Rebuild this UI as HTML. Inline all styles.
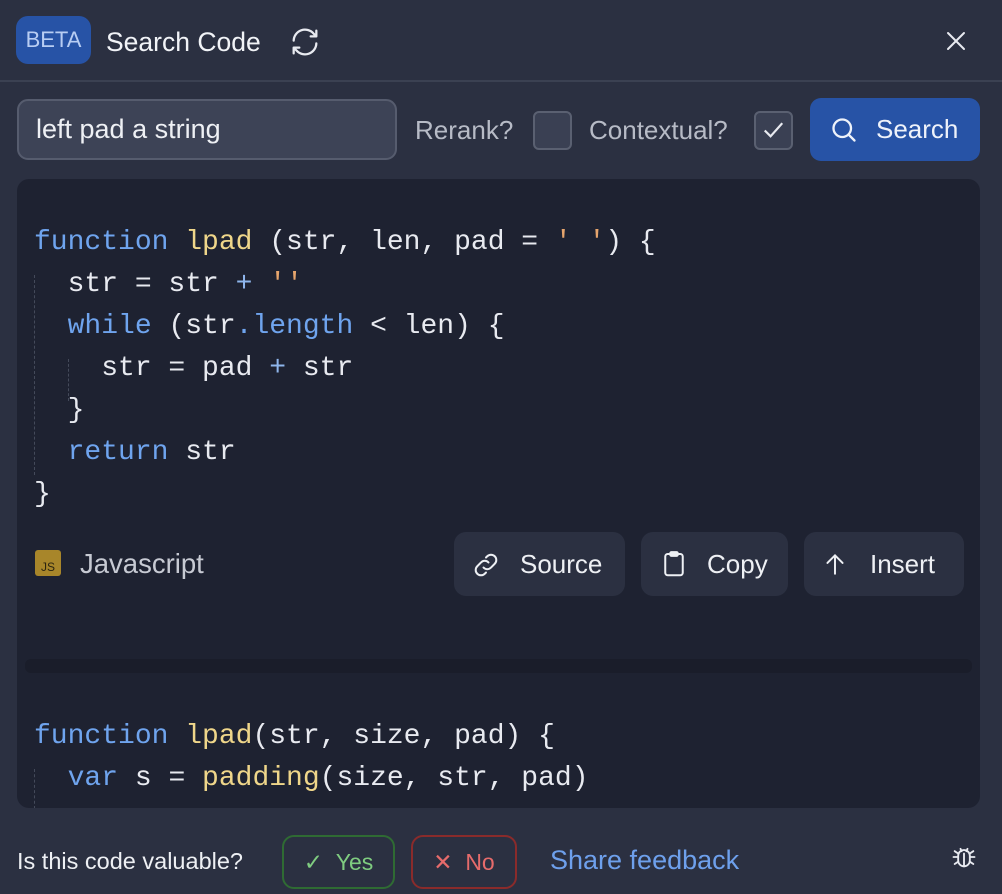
<!DOCTYPE html>
<html><head><meta charset="utf-8"><style>
*{margin:0;padding:0;box-sizing:border-box}
body{width:1002px;height:894px;background:#2b3041;font-family:"Liberation Sans",sans-serif;color:#e6e8ee;position:relative;overflow:hidden}
.abs{position:absolute}
.beta{left:16px;top:16px;width:75px;height:48px;background:#2753a6;border-radius:12px;color:#b8cdf3;font-size:22px;line-height:48px;text-align:center}
.hline{left:0;top:80px;width:1002px;height:2px;background:#3b4152}
.input{left:17px;top:99px;width:380px;height:61px;background:#3d4356;border:2px solid #565c6e;border-radius:11px;font-size:27px;line-height:57px;padding-left:17px;color:#eef0f4}
.lbl{font-size:26px;color:#b7bbc6;top:115px}
.cb{width:39px;height:39px;border:2px solid #5a6071;background:#3a4053;border-radius:6px;top:111px}
.sbtn{left:810px;top:98px;width:170px;height:63px;background:#2753a6;border-radius:11px;font-size:26px;color:#eef2fa;line-height:63px}
.code{left:17px;top:179px;width:963px;height:629px;background:#1e2231;border-radius:12px;overflow:hidden}
pre{font-family:"Liberation Mono",monospace;font-size:28px;line-height:42px;color:#e8eaf0;position:absolute;left:17px}
.k{color:#6fa4ee}.f{color:#efd68a}.s{color:#e6a56d}.o{color:#8fb6ec}
.guide{position:absolute;border-left:1px dashed #444a5a}
.btn{top:353px;height:64px;background:#2b3041;border-radius:12px;font-size:26px;line-height:64px;color:#eef0f4}
.sep{left:8px;top:480px;width:947px;height:14px;background:#1a1d2a;border-radius:6px}
.fb{top:835px;height:54px;border-radius:12px;font-size:23px;line-height:50px;text-align:center}
</style></head><body>
<div class="abs beta">BETA</div>
<div class="abs" style="left:106px;top:27px;font-size:26.5px;color:#f1f3f7">Search Code</div>
<svg class="abs" style="left:288px;top:25px" width="34" height="34" viewBox="0 0 24 24" fill="none" stroke="#e8eaf0" stroke-width="1.6" stroke-linecap="round" stroke-linejoin="round"><path d="M4 11a8 8 0 0 1 14-5l2 2M20 4v4h-4M20 13a8 8 0 0 1-14 5l-2-2M4 20v-4h4"/></svg>
<svg class="abs" style="left:944px;top:29px" width="24" height="24" viewBox="0 0 24 24" stroke="#e8eaf0" stroke-width="2" stroke-linecap="round"><path d="M4 4l16 16M20 4L4 20"/></svg>
<div class="abs hline"></div>
<div class="abs input">left pad a string</div>
<div class="abs lbl" style="left:415px">Rerank?</div>
<div class="abs cb" style="left:533px"></div>
<div class="abs lbl" style="left:589px">Contextual?</div>
<div class="abs cb" style="left:754px"><svg width="35" height="35" viewBox="0 0 24 24" fill="none" stroke="#e8eaf0" stroke-width="1.5"><path d="M6 12l4 4 8-9"/></svg></div>
<div class="abs sbtn"><svg style="position:absolute;left:20px;top:18px" width="28" height="28" viewBox="0 0 24 24" fill="none" stroke="#eef2fa" stroke-width="2" stroke-linecap="round"><circle cx="10.5" cy="10.5" r="7.5"/><path d="M16 16l5 5"/></svg><span style="position:absolute;left:66px">Search</span></div>
<div class="abs code">
<pre style="top:43px"><span class="k">function</span> <span class="f">lpad</span> (str, len, pad = <span class="s">' '</span>) {
  str = str <span class="o">+</span> <span class="s">''</span>
  <span class="k">while</span> (str<span class="k">.length</span> &lt; len) {
    str = pad <span class="o">+</span> str
  }
  <span class="k">return</span> str
}</pre>
<div class="guide" style="left:17px;top:96px;height:200px"></div>
<div class="guide" style="left:51px;top:180px;height:42px"></div>
<div class="abs" style="left:18px;top:371px;width:26px;height:26px;background:#a8862a;border-radius:3px;font-size:12px;color:#2b2410;padding:11px 0 0 6px;line-height:12px">JS</div>
<div class="abs" style="left:63px;top:369px;font-size:27.5px;color:#c7cad3">Javascript</div>
<div class="abs btn" style="left:437px;width:171px"><svg style="position:absolute;left:17px;top:18px" width="30" height="30" viewBox="0 0 24 24" fill="none" stroke="#eef0f4" stroke-width="1.6" stroke-linecap="round"><path d="M10 14a4 4 0 0 0 6 0l3-3a4 4 0 0 0-6-6l-1 1M14 10a4 4 0 0 0-6 0l-3 3a4 4 0 0 0 6 6l1-1"/></svg><span style="position:absolute;left:66px">Source</span></div>
<div class="abs btn" style="left:624px;width:147px"><svg style="position:absolute;left:18px;top:17px" width="30" height="30" viewBox="0 0 24 24" fill="none" stroke="#eef0f4" stroke-width="1.6" stroke-linejoin="round"><rect x="5" y="4" width="14" height="17" rx="2"/><rect x="9" y="2.5" width="6" height="3" rx="1"/></svg><span style="position:absolute;left:66px">Copy</span></div>
<div class="abs btn" style="left:787px;width:160px"><svg style="position:absolute;left:18px;top:19px" width="26" height="26" viewBox="0 0 24 24" fill="none" stroke="#eef0f4" stroke-width="1.8" stroke-linecap="round"><path d="M12 21V4M5 11l7-7 7 7"/></svg><span style="position:absolute;left:66px">Insert</span></div>
<div class="abs sep"></div>
<pre style="top:537px"><span class="k">function</span> <span class="f">lpad</span>(str, size, pad) {
  <span class="k">var</span> s = <span class="f">padding</span>(size, str, pad)</pre>
<div class="guide" style="left:17px;top:590px;height:40px"></div>
</div>
<div class="abs" style="left:17px;top:848px;font-size:23.5px;color:#eef0f4">Is this code valuable?</div>
<div class="abs fb" style="left:282px;width:113px;border:2px solid #2f6b33;color:#7fcc80">✓&nbsp;&nbsp;Yes</div>
<div class="abs fb" style="left:411px;width:106px;border:2px solid #8a2b2b;color:#e66b6b">✕&nbsp;&nbsp;No</div>
<div class="abs" style="left:550px;top:845px;font-size:27px;color:#6ea0ec">Share feedback</div>
<svg class="abs" style="left:950px;top:843px" width="28" height="28" viewBox="0 0 24 24" fill="none" stroke="#e8eaf0" stroke-width="1.6" stroke-linecap="round"><rect x="7" y="6" width="10" height="14" rx="5"/><path d="M9 5l1 2M15 5l-1 2M12 9v11M3 12h4M17 12h4M4 18l3-2M20 18l-3-2M4 7l3 2M20 7l-3 2"/></svg>
</body></html>
